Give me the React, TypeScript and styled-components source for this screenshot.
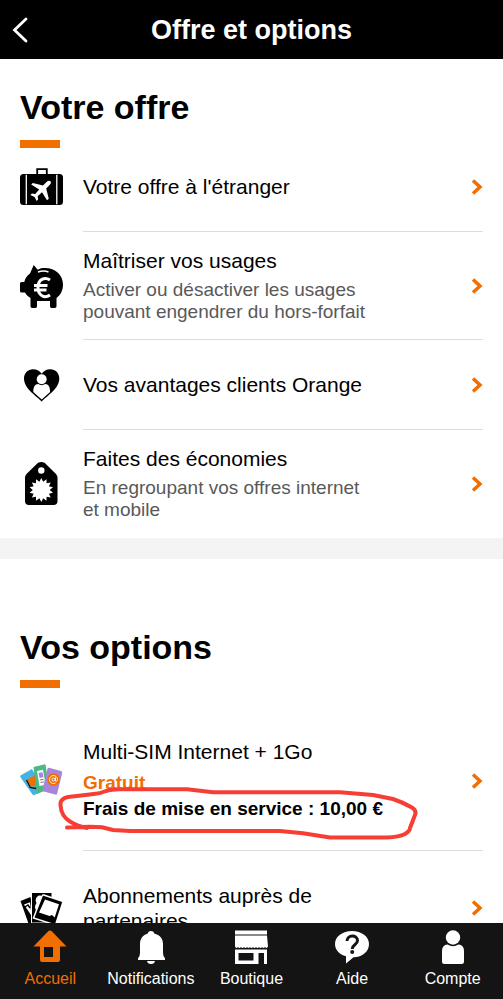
import React, { ReactNode } from "react";
import styled, { createGlobalStyle } from "styled-components";

const ORANGE = "#f16e00";

const GlobalStyle = createGlobalStyle`
  * { box-sizing: border-box; }
  body { margin: 0; background: #fff; color: #000; font-family: "Liberation Sans", Arial, sans-serif; }
`;

const Screen = styled.div`
  display: flex;
  flex-direction: column;
  height: 100vh;
  overflow: hidden;
`;

const TopBar = styled.header`
  display: grid;
  grid-template-columns: 48px 1fr 48px;
  align-items: center;
  flex: none;
  height: 59px;
  background: #000;
  color: #fff;
`;

const BackButton = styled.button`
  display: flex;
  padding: 0 0 0 12px;
  border: 0;
  background: none;
  color: inherit;
`;

const ScreenTitle = styled.h1`
  margin: 0;
  font-size: 27px;
  line-height: 32px;
  text-align: center;
`;

const Content = styled.main`
  flex: 1;
  min-height: 0;
  overflow: hidden;
`;

const Section = styled.section`
  padding: 0 20px;
`;

const SectionTitle = styled.h2<{ $spacious?: boolean }>`
  margin: 0;
  padding: ${(p) => (p.$spacious ? "68px 0 22px" : "28px 0 0")};
  font-size: 34px;
  line-height: 40px;

  &::after {
    content: "";
    display: block;
    width: 40px;
    height: 8px;
    margin-top: 13px;
    background: ${ORANGE};
  }
`;

const Separator = styled.div`
  height: 21px;
  background: #f4f4f4;
`;

const List = styled.ul`
  margin: 0;
  padding: 0;
  list-style: none;
`;

type RowSize = "first" | "medium" | "large" | "roomy";

const rowPadding: Record<RowSize, string> = {
  first: "26px 0 32px",
  medium: "16px 0",
  large: "32px 0",
  roomy: "29px 0 28px",
};

const RowLink = styled.a<{ $size: RowSize }>`
  display: grid;
  grid-template-columns: 44px 1fr;
  column-gap: 19px;
  color: inherit;
  text-decoration: none;

  & > * {
    padding: ${(p) => rowPadding[p.$size]};
  }
`;

const IconCell = styled.span`
  display: flex;
  align-items: center;

  svg {
    flex: none;
    margin: -10px 0;
    overflow: visible;
  }
`;

const RowBody = styled.span<{ $divided: boolean }>`
  display: flex;
  align-items: center;
  justify-content: space-between;
  border-bottom: 1px solid ${(p) => (p.$divided ? "#dcdcdc" : "transparent")};
`;

const RowText = styled.span`
  display: flex;
  flex-direction: column;
  gap: 6px;
  max-width: 290px;
`;

const RowTitle = styled.span`
  font-size: 21px;
  line-height: 25px;
`;

const RowDetail = styled.span`
  color: #595959;
  font-size: 19px;
  line-height: 22px;
`;

const Price = styled.strong`
  display: block;
  color: ${ORANGE};
  font-size: 19px;
  line-height: 26px;
`;

const Fee = styled.strong`
  position: relative;
  display: block;
  font-size: 19px;
  line-height: 26px;
  white-space: nowrap;
`;

const Scribble = styled.svg`
  position: absolute;
  left: -27px;
  top: -16px;
  pointer-events: none;
`;

const TabBar = styled.nav`
  display: flex;
  flex: none;
  height: 76px;
  padding-top: 6px;
  background: #141414;
`;

const Tab = styled.a<{ $active?: boolean }>`
  display: flex;
  flex: 1;
  flex-direction: column;
  align-items: center;
  gap: 4px;
  color: ${(p) => (p.$active ? ORANGE : "#fff")};
  font-size: 16px;
  line-height: 20px;
  text-decoration: none;
`;

const Icon44 = ({ children }: { children: ReactNode }) => (
  <svg width="44" height="44" viewBox="0 0 44 44" aria-hidden="true">
    {children}
  </svg>
);

const Icon36 = ({ children }: { children: ReactNode }) => (
  <svg width="36" height="36" viewBox="0 0 36 36" fill="currentColor" aria-hidden="true">
    {children}
  </svg>
);

const Suitcase = () => (
  <Icon44>
    <path d="M17.2 10V4.2h9.6V10" fill="none" stroke="#000" strokeWidth="1.8" />
    <rect y="9" width="43" height="31" rx="3.5" />
    <path d="M6.3 9.8v29.4M36.8 9.8v29.4" stroke="#fff" strokeWidth="1.3" />
    <path
      d="M30.500 16.300c1 1 .300 2.500-.900 3.700l-3.400 3.500 2.600 10.300-1.800 1.500-5-8-4.300 4 .400 3.300-1.500 1.400-2-4-4.200-2 1.500-1.500 3.300.400 4-4.300-8-5 1.600-1.700 10.200 2.500 3.500-3.400c1.300-1.200 3-1.700 4-.7z"
      fill="#fff"
    />
  </Icon44>
);

const PiggyBank = () => (
  <Icon44>
    <path d="M10 9.500 13.700 1l4 4.800C20 4.400 22 4 25 4c10.500 0 18 7.300 18 16.500 0 6-2.500 10.500-6.500 13.500v8.300q0 1.700-1.700 1.700h-3.300q-1.500 0-1.500-1.700V37H17v5.300q0 1.700-1.500 1.700h-3.300q-1.700 0-1.700-1.700V34c-2.500-1.500-4.500-3.300-5.500-5.500H1.500Q0 28.500 0 27v-7.500Q0 18 1.500 18h2.800C5 14.500 7 11.500 10 9.500z" />
    <path d="M18 8c3.500-1.200 7.500-1.200 10.500 0" fill="none" stroke="#fff" strokeWidth="1.500" />
    <path d="M30 16C24.500 12.300 18 15.500 18 23.500s6.500 11.300 12 7.500M14 21.500h13.500M14 26h12.500" fill="none" stroke="#fff" strokeWidth="3" />
  </Icon44>
);

const HeartPerson = () => (
  <Icon44>
    <path d="M21.700 38.700C17 33 4 26 4 15.500 4 10 8 6.200 13 6.200c4 0 7 2 8.700 4.600 1.700-2.600 4.700-4.600 8.700-4.600 5 0 8.900 3.800 8.900 9.300 0 10.500-13 17.500-17.600 23.200z" />
    <circle cx="21.700" cy="16.300" r="5" fill="#fff" />
    <path d="M13.300 29c0-5 1.500-8 5-8 2 1.500 4.700 1.500 6.800 0 3.500 0 5 3 5 8l-8.400 7.500z" fill="#fff" />
  </Icon44>
);

const burst = Array.from({ length: 28 }, (_, i) => {
  const angle = (i * Math.PI) / 14;
  const radius = i % 2 ? 8.5 : 12;
  return `${21.3 + radius * Math.sin(angle)},${28 - radius * Math.cos(angle)}`;
}).join(" ");

const PriceTag = () => (
  <Icon44>
    <path d="M18 .8q3.300-1.600 6.600 0L36 12q1.500 1.500 1.500 3.500V39q0 4-4 4H9q-4 0-4-4V15.500Q5 13.500 6.500 12z" />
    <circle cx="21.300" cy="8.500" r="3.200" fill="#fff" />
    <polygon points={burst} fill="#fff" />
  </Icon44>
);

const SimCards = () => (
  <Icon44>
    <path d="M.800 16.200 12 10l12 21-9.500 5q-1.200.600-2-.500L.300 18q-.500-1.200.5-1.800z" fill="#45b3e0" />
    <path d="m6.500 21 8-4.500 4.500 8.500-8 3z" fill={ORANGE} />
    <path d="m6.500 21 3.800 7.500 5.200 1 4-3.500" fill="none" stroke="#111" strokeWidth="1.300" />
    <path d="m13.500 8 10.500-2.600q1.300-.200 1.700 1L29 30l-12 5z" fill="#4cb884" />
    <path d="m17 12 6-1.200 2.500 15-6 1.200z" fill="#fff" />
    <path d="m18.500 14 4-.800 1 5-4 .800z" fill="#a885d8" />
    <path d="m20 21 3.500-.7M20.500 23.500l3.500-.700" stroke="#777" strokeWidth="1" />
    <path d="m29 8.800 12 3.300q1.500.500 1.200 2l-5 20.400q-.500 1.500-2 1.100l-11.500-3q-1.500-.400-1.100-2L27.400 10q.400-1.400 1.600-1.200z" fill="#a885d8" />
    <circle cx="33.500" cy="20.500" r="6.200" fill={ORANGE} />
    <circle cx="33.500" cy="20.500" r="1.500" fill="none" stroke="#fff" />
    <path d="M35.500 18.500v3c0 1.500 2 1 2-1a4 4 0 1 0-2 3.500" fill="none" stroke="#fff" strokeWidth=".9" />
  </Icon44>
);

const MediaCards = () => (
  <Icon44>
    <path d="m.5 14 10-4L16 38H9z" />
    <path d="m4 17.500 6-2.300 1.500 13.500z" fill="#fff" />
    <path d="m5 20 3-2 2 3" fill="none" stroke="#000" strokeWidth="1.500" />
    <path d="M11.500 5.500H32V36H11.500z" stroke="#fff" />
    <path d="M18 9c3-1.500 5 1 3 4l-1 3-4 7c-2-3-.5-5 .5-7-1.500-2-1-5.500 1.500-7z" fill="#fff" />
    <path d="m23.700 8 18 6q1.300.500 1 1.700L35.500 38l-22-7L22 9q.5-1.400 1.700-1z" stroke="#fff" strokeWidth="1.500" />
    <path d="m25 12.500 14 4.700-4.300 13.300-2.700-2.500-2.500 1L19 25.500z" fill="#fff" />
  </Icon44>
);

const Chevron = () => (
  <svg width="12" height="16" viewBox="0 0 12 16" aria-hidden="true">
    <path d="m2 1.500 7 6.500-7 6.500" fill="none" stroke={ORANGE} strokeWidth="3.500" />
  </svg>
);

interface RowProps {
  icon: ReactNode;
  title: string;
  size: RowSize;
  divided?: boolean;
  children?: ReactNode;
}

const Row = ({ icon, title, size, divided = true, children }: RowProps) => (
  <li>
    <RowLink href="#" $size={size}>
      <IconCell>{icon}</IconCell>
      <RowBody $divided={divided}>
        <RowText>
          <RowTitle>{title}</RowTitle>
          {children}
        </RowText>
        <Chevron />
      </RowBody>
    </RowLink>
  </li>
);

export default function App() {
  return (
    <Screen>
      <GlobalStyle />
      <TopBar>
        <BackButton type="button" aria-label="Retour">
          <svg width="16" height="26" viewBox="0 0 16 26" aria-hidden="true">
            <path d="M14 2 2.500 13 14 24" fill="none" stroke="#fff" strokeWidth="2.800" strokeLinecap="round" />
          </svg>
        </BackButton>
        <ScreenTitle>Offre et options</ScreenTitle>
      </TopBar>

      <Content>
        <Section>
          <SectionTitle>Votre offre</SectionTitle>
          <List>
            <Row icon={<Suitcase />} title="Votre offre à l'étranger" size="first" />
            <Row icon={<PiggyBank />} title="Maîtriser vos usages" size="medium">
              <RowDetail>Activer ou désactiver les usages pouvant engendrer du hors-forfait</RowDetail>
            </Row>
            <Row icon={<HeartPerson />} title="Vos avantages clients Orange" size="large" />
            <Row icon={<PriceTag />} title="Faites des économies" size="medium" divided={false}>
              <RowDetail>En regroupant vos offres internet et&nbsp;mobile</RowDetail>
            </Row>
          </List>
        </Section>
        <Separator />
        <Section>
          <SectionTitle $spacious>Vos options</SectionTitle>
          <List>
            <Row icon={<SimCards />} title="Multi-SIM Internet + 1Go" size="roomy">
              <span>
                <Price>Gratuit</Price>
                <Fee>
                  Frais de mise en service : 10,00 €
                  <Scribble width="364" height="62" viewBox="0 0 364 62" fill="none" stroke="#f63e35" strokeWidth="4" strokeLinecap="round" strokeLinejoin="round" aria-hidden="true">
                    <path d="M11 47.500 34 46.700 46 47.300 57 50 74 51H224L247 53.300 274 57.500H331Q343 57 349 54 354 51 354 48L359 35Q361 30 355 27 346 22 337 19L317 15 284 12.300H157L131 9.300H66Q56 9 50 11 44 13.500 38 14L12 17Q4 18.500 4.500 25 5 36 14 41.500 22 46.500 31 48" />
                  </Scribble>
                </Fee>
              </span>
            </Row>
            <Row icon={<MediaCards />} title="Abonnements auprès de partenaires" size="large" />
          </List>
        </Section>
      </Content>

      <TabBar>
        <Tab href="#" $active aria-current="page">
          <Icon36>
            <path fillRule="evenodd" d="M18 1.500q1 0 1.800.8L34.500 17.500H28V31q0 2-2 2H10q-2 0-2-2V17.500H1.500L16.200 2.300q.8-.8 1.800-.8zM12 18v10h9V18z" />
          </Icon36>
          Accueil
        </Tab>
        <Tab href="#">
          <Icon36>
            <path d="M18 2c2 0 3 1 3.200 2.500C27 6 30 9.500 30 15v9q0 3.500 2 5.200V31H5v-1.800Q7 27.500 7 24v-9C7 9.500 10 6 14.800 4.500 15 3 16 2 18 2zM14 32h8q-.5 3-4 3t-4-3z" />
          </Icon36>
          Notifications
        </Tab>
        <Tab href="#">
          <Icon36>
            <path d="M2 1.500h32v4H2zM2 6.500h32l1 11q-1.200 2.500-3 .5-1.500 2-3 0-1.500 2-3 0-1.500 2-3 0-1.500 2-3 0-1.500 2-3 0-1.500 2-3 0-1.500 2-3 0-1.500 2-3 0-1.500 2-3 0-1.800 2-3-.5z" />
            <path fillRule="evenodd" d="M2 20.500h32V35h-3V24h-5.500v11H2zM5.500 24v7.500h15V24z" />
          </Icon36>
          Boutique
        </Tab>
        <Tab href="#">
          <Icon36>
            <path d="M18 2c9.500 0 17 5.500 17 13s-6.500 13-15.500 13.300L12 34.500v-7.200C5.500 25.500 1 21 1 15 1 7.500 8.500 2 18 2z" />
            <path d="M13 12c0-6.500 10.500-6.500 10.500-.5 0 4.500-5.300 4-5.300 8.500" fill="none" stroke="#141414" strokeWidth="3" />
            <circle cx="18.200" cy="23" r="2" fill="#141414" />
          </Icon36>
          Aide
        </Tab>
        <Tab href="#">
          <Icon36>
            <circle cx="18" cy="8.500" r="7.200" />
            <path d="M12.500 15.500q5.500 3.500 11 0Q29 16 29 22v10.500q0 2.500-2.500 2.500h-17Q7 35 7 32.500V22q0-6 5.500-6.500z" />
          </Icon36>
          Compte
        </Tab>
      </TabBar>
    </Screen>
  );
}
